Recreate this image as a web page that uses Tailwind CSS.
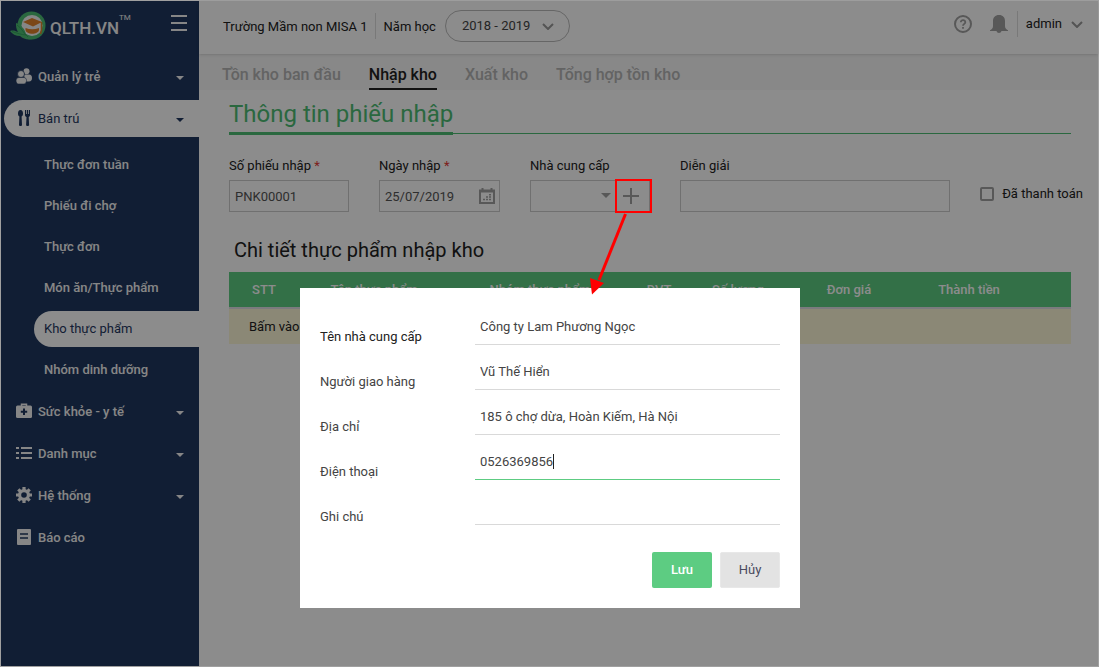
<!DOCTYPE html>
<html lang="vi">

<head>
    <meta charset="UTF-8" />
    <meta name="viewport" content="width=device-width, initial-scale=1.0" />
    <title>QLTH.VN - Nhập kho</title>
    <script src="https://cdn.jsdelivr.net/npm/@tailwindcss/browser@4"></script>
</head>

<body class="min-h-screen bg-white font-[Roboto,'Noto_Sans',sans-serif] text-[13px] leading-4 text-[#212121]">

    <div class="flex min-h-screen border border-[#a0a0a0]">

        <!-- Sidebar -->
        <aside class="w-[198px] shrink-0 bg-[#1f375f] font-medium text-[#f5f5f5]">
            <div class="flex h-[54px] items-center pl-[9px] pr-3">
                <a href="#" class="flex items-center gap-1" aria-label="QLTH.VN">
                    <svg class="mb-1 h-[30px] w-9" viewBox="0 0 36 30">
                        <circle cx="21.500" cy="14.500" r="14" fill="#4dbd74" />
                        <circle cx="22" cy="14.500" r="10.500" fill="#f5f5f5" />
                        <path d="M0 20c4-1 5 0 8 1-2-3-2-6-2-9 5 2 9 6 10 11 2 1 5 2 7 5-5 1-10 0-13-3-4 0-8-2-10-5z" fill="#4dbd74" />
                        <path d="M7 14c5 3 6 8 11 12M2 20.500c6 2 9 3 14 3.500" fill="none" stroke="#2f9e58" stroke-width=".8" />
                        <path d="M13 11l9-4 10 4-9 4.500z" fill="#e0822a" />
                        <path d="M16 14l7 2.800 6-2.800v3.500c-4 2-9 2-13 0z" fill="#f5f5f5" />
                        <path d="M15.500 17c4.500 1.800 9 1.800 13.500 0v2c-1 5-12.500 5-13.500 0z" fill="#e0822a" />
                        <path d="M31.500 11v8l-1 4" fill="none" stroke="#e0822a" stroke-width="1.500" />
                    </svg>
                    <span class="text-[17px] font-medium">QLTH.VN</span>
                    <span class="-ml-1 mb-5 text-[8px] leading-3 font-normal">TM</span>
                </a>
                <button type="button" class="mb-2.5 ml-auto flex w-4 flex-col gap-[5px]" aria-label="Menu">
                    <span class="h-0.5 w-4 bg-[#f5f5f5]"></span>
                    <span class="h-0.5 w-4 bg-[#f5f5f5]"></span>
                    <span class="h-0.5 w-4 bg-[#f5f5f5]"></span>
                </button>
            </div>

            <nav>
                <a href="#" class="flex h-[42px] items-center gap-1.5 pl-[15px] pr-[15px]">
                    <svg class="size-4" viewBox="0 0 16 16" fill="currentColor">
                        <circle cx="10.500" cy="3.200" r="3" />
                        <path d="M8 6.500h5c2 0 3 1.500 3 3.500s-1 3.500-3 3.500H9z" />
                        <circle cx="5" cy="6" r="3.500" stroke="#1f375f" stroke-width=".8" />
                        <path d="M3 9.500h4.500c2 0 3 1.200 3 3S9.500 16 8 16H2.500C1 16 0 14.500 0 12.800S1 9.500 3 9.500z" stroke="#1f375f" stroke-width=".6" />
                    </svg>
                    <span class="pt-0.5">Quản lý trẻ</span>
                    <svg class="mt-1 ml-auto h-1 w-2" viewBox="0 0 8 4" fill="currentColor"><path d="M0 0h8L4 4z" /></svg>
                </a>
                <div class="flex h-[42px] items-center pl-[3px]">
                    <a href="#" class="flex h-[37px] flex-1 items-center gap-1.5 rounded-l-full bg-white pl-3 pr-[15px] font-normal text-[#1f375f]">
                        <svg class="size-4" viewBox="0 0 16 16" fill="currentColor">
                            <path d="M4.500 0C6.300 0 7 1.700 7 3.500 7 5 6.500 6 5.600 6.500L6 15c0 1.300-3 1.300-3 0l.4-8.500C2.500 6 2 5 2 3.500 2 1.700 2.700 0 4.500 0z" />
                            <path d="M9 0h1v4h.8V0h1.400v4h.8V0h1v5c0 1-.6 1.700-1.300 2l.4 8c0 1.300-3 1.300-3 0l.4-8C9.600 6.700 9 6 9 5z" />
                        </svg>
                        <span class="pt-0.5">Bán trú</span>
                        <svg class="mt-1 ml-auto h-1 w-2" viewBox="0 0 8 4" fill="currentColor"><path d="M0 0h8L4 4z" /></svg>
                    </a>
                </div>

                <div class="pt-[5px]">
                    <a href="#" class="flex h-[41px] items-center pl-[43px]">Thực đơn tuần</a>
                    <a href="#" class="flex h-[41px] items-center pl-[43px]">Phiếu đi chợ</a>
                    <a href="#" class="flex h-[41px] items-center pl-[43px]">Thực đơn</a>
                    <a href="#" class="flex h-[41px] items-center pl-[43px]">Món ăn/Thực phẩm</a>
                    <div class="flex h-[41px] items-center pl-[33px]">
                        <a href="#" class="flex h-9 flex-1 items-center rounded-l-full bg-white pl-2.5 font-normal text-[#1f375f]">Kho thực phẩm</a>
                    </div>
                    <a href="#" class="flex h-[41px] items-center pl-[43px]">Nhóm dinh dưỡng</a>
                </div>

                <a href="#" class="flex h-[42px] items-center gap-1.5 pl-[15px] pr-[15px]">
                    <svg class="size-4" viewBox="0 0 16 16">
                        <path d="M5.500 3V1.300h5V3" fill="none" stroke="currentColor" stroke-width="1.500" />
                        <rect y="2.500" width="16" height="12.500" rx="1.500" fill="currentColor" />
                        <path d="M8 5.500v6.500M4.800 8.800h6.400" stroke="#1f375f" stroke-width="2" />
                    </svg>
                    <span class="pt-0.5">Sức khỏe - y tế</span>
                    <svg class="mt-1 ml-auto h-1 w-2" viewBox="0 0 8 4" fill="currentColor"><path d="M0 0h8L4 4z" /></svg>
                </a>
                <a href="#" class="flex h-[42px] items-center gap-1.5 pl-[15px] pr-[15px]">
                    <svg class="size-4" viewBox="0 0 16 16" fill="currentColor">
                        <path d="M0 2h3v2H0zM5 2h11v2H5zM0 7h3v2H0zM5 7h11v2H5zM0 12h3v2H0zM5 12h11v2H5z" />
                    </svg>
                    <span class="pt-0.5">Danh mục</span>
                    <svg class="mt-1 ml-auto h-1 w-2" viewBox="0 0 8 4" fill="currentColor"><path d="M0 0h8L4 4z" /></svg>
                </a>
                <a href="#" class="flex h-[42px] items-center gap-1.5 pl-[15px] pr-[15px]">
                    <svg class="size-4" viewBox="0 0 16 16">
                        <path d="M8 0v16M0 8h16M2.300 2.300l11.400 11.400M13.700 2.300L2.300 13.700" stroke="currentColor" stroke-width="3.200" />
                        <circle cx="8" cy="8" r="6" fill="currentColor" />
                        <circle cx="8" cy="8" r="2.800" fill="#1f375f" />
                    </svg>
                    <span class="pt-0.5">Hệ thống</span>
                    <svg class="mt-1 ml-auto h-1 w-2" viewBox="0 0 8 4" fill="currentColor"><path d="M0 0h8L4 4z" /></svg>
                </a>
                <a href="#" class="flex h-[42px] items-center gap-1.5 pl-[15px] pr-[15px]">
                    <svg class="size-4" viewBox="0 0 16 16">
                        <rect x="1" width="14" height="16" rx="1" fill="currentColor" />
                        <path d="M4 5h8M4 9h8" stroke="#1f375f" stroke-width="1.500" />
                    </svg>
                    <span class="pt-0.5">Báo cáo</span>
                </a>
            </nav>
        </aside>

        <!-- Content -->
        <div class="min-w-0 flex-1">
            <header class="relative flex h-[53px] items-center pb-[3px] pl-6 pr-[15px] shadow">
                <span class="pt-0.5">Trường Mầm non MISA 1</span>
                <span class="mr-2 ml-[7px] h-[26px] w-px bg-[#ddd]"></span>
                <label for="school-year" class="pt-0.5">Năm học</label>
                <div class="relative ml-[9px]">
                    <select id="school-year" class="block h-8 w-[125px] appearance-none rounded-full border border-[#bbb] pl-4 text-[#444]">
                        <option>2018 - 2019</option>
                    </select>
                    <svg class="pointer-events-none absolute top-[13px] right-4 h-[7px] w-3" viewBox="0 0 12 7" fill="none" stroke="#999" stroke-width="2"><path d="M1 1l5 5 5-5" /></svg>
                </div>

                <div class="mb-1 ml-auto flex items-center">
                    <button type="button" aria-label="Trợ giúp">
                        <svg class="size-[18px]" viewBox="0 0 18 18" fill="none" stroke="#a0a0a0">
                            <circle cx="9" cy="9" r="8" stroke-width="2" />
                            <path d="M6.800 7.300c0-3 4.600-2.800 4.500 0C11.300 8.900 9 8.900 9 10.800M9 12v1.800" stroke-width="1.800" />
                        </svg>
                    </button>
                    <button type="button" class="ml-[18px]" aria-label="Thông báo">
                        <svg class="size-[18px]" viewBox="0 0 18 18" fill="#a0a0a0">
                            <path d="M9 0c3.800 0 6 2.500 6 6v5c0 2 1 3.500 3 4.200V16h-6.500c-.5 2.600-4.500 2.600-5 0H0v-.8C2 14.500 3 13 3 11V6c0-3.500 2.200-6 6-6z" />
                        </svg>
                    </button>
                    <span class="mr-2 ml-[9px] h-[26px] w-px bg-[#ddd]"></span>
                    <button type="button" class="flex items-center gap-[9px]">
                        admin
                        <svg class="h-[7px] w-3" viewBox="0 0 12 7" fill="none" stroke="#999" stroke-width="2"><path d="M1 1l5 5 5-5" /></svg>
                    </button>
                </div>
            </header>

            <nav class="flex h-9 gap-7 bg-[#f7f7f7] pl-[23px] text-base font-medium text-[#b5b5b5]">
                <a href="#" class="flex items-center pt-1.5">Tồn kho ban đầu</a>
                <a href="#" class="flex items-center border-b-2 border-[#212121] pt-2 text-[#212121]">Nhập kho</a>
                <a href="#" class="flex items-center pt-1.5">Xuất kho</a>
                <a href="#" class="flex items-center pt-1.5">Tổng hợp tồn kho</a>
            </nav>

            <main class="pl-[30px] pr-[27px]">
                <div class="flex items-end">
                    <h1 class="border-b-[3px] border-[#4dbd74] pt-[9px] pb-[3px] text-2xl leading-[30px] text-[#4dbd74]">Thông tin phiếu nhập</h1>
                    <span class="mb-px h-px flex-1 bg-[#4dbd74]"></span>
                </div>

                <form class="-mr-3 flex gap-[30px] pt-[23px]">
                    <div class="w-[120px]">
                        <label for="voucher" class="block pb-1.5">Số phiếu nhập <span class="text-[#e53935]">*</span></label>
                        <input id="voucher" type="text" value="PNK00001" class="h-8 w-full border border-[#ccc] px-[5px] text-[#555]" />
                    </div>
                    <div class="w-[121px]">
                        <label for="import-date" class="block pb-1.5">Ngày nhập <span class="text-[#e53935]">*</span></label>
                        <div class="flex h-8 items-center border border-[#ccc] pr-1">
                            <input id="import-date" type="text" value="25/07/2019" class="h-full min-w-0 flex-1 px-[5px] text-[#555]" />
                            <button type="button" aria-label="Chọn ngày">
                                <svg class="size-4" viewBox="0 0 16 16" fill="none" stroke="#a0a0a0">
                                    <path d="M1 2.500h14V15H1z" stroke-width="2" />
                                    <path d="M3.500 0v4M12.500 0v4M1 3.500h14" stroke-width="2" />
                                    <path d="M4 11.500h2M7 11.500h2M10 11.500h2M7 9h2M10 9h2M10 6.800h2" stroke-width="1.500" />
                                </svg>
                            </button>
                        </div>
                    </div>
                    <div class="w-[120px]">
                        <label for="supplier" class="block pb-1.5">Nhà cung cấp</label>
                        <div class="flex h-8 border border-[#ccc]">
                            <div class="relative flex-1">
                                <select id="supplier" class="h-full w-full appearance-none"></select>
                                <svg class="pointer-events-none absolute top-3 right-1 h-[5px] w-2.5" viewBox="0 0 10 5" fill="#a0a0a0"><path d="M0 0h10L5 5z" /></svg>
                            </div>
                            <button type="button" class="flex w-[34px] items-center pl-2" aria-label="Thêm nhà cung cấp">
                                <svg class="size-4" viewBox="0 0 16 16" stroke="#a0a0a0" stroke-width="2"><path d="M8 0v16M0 8h16" /></svg>
                            </button>
                        </div>
                    </div>
                    <div class="flex-1">
                        <label for="note" class="block pb-1.5">Diễn giải</label>
                        <input id="note" type="text" class="h-8 w-full border border-[#ccc] px-[5px]" />
                    </div>
                    <label class="flex items-center gap-2 self-end pb-2.5 whitespace-nowrap">
                        <input type="checkbox" class="size-3.5 appearance-none rounded-xs border-2 border-[#a0a0a0]" />
                        Đã thanh toán
                    </label>
                </form>

                <h2 class="pt-[26px] pb-2.5 pl-[5px] text-xl leading-6">Chi tiết thực phẩm nhập kho</h2>

                <table class="w-full table-fixed border-collapse">
                    <thead>
                        <tr class="h-9 border-b-2 border-[#e0e0e6] bg-[#5dcc82] text-white">
                            <th class="w-[70px] font-medium">STT</th>
                            <th class="w-[150px] font-medium">Tên thực phẩm</th>
                            <th class="w-[182px] font-medium">Nhóm thực phẩm</th>
                            <th class="w-14 font-medium">ĐVT</th>
                            <th class="w-[102px] font-medium">Số lượng</th>
                            <th class="w-[120px] font-medium">Đơn giá</th>
                            <th class="w-[120px] font-medium">Thành tiền</th>
                            <th></th>
                        </tr>
                    </thead>
                    <tbody>
                        <tr class="h-9 bg-[#fdf7d8]">
                            <td colspan="8" class="pl-5">Bấm vào</td>
                        </tr>
                    </tbody>
                </table>
            </main>
        </div>
    </div>

    <!-- Backdrop -->
    <div class="fixed inset-px bg-black/45"></div>

    <!-- Supplier dialog -->
    <div class="fixed inset-0 flex items-start justify-center pt-72 pl-px">
        <form role="dialog" aria-label="Thêm nhà cung cấp" class="w-[500px] bg-white px-5 pt-3 pb-5 text-[#444]">
            <div class="flex h-[45px] items-end">
                <label for="sup-name" class="w-[155px] text-[#212121]">Tên nhà cung cấp</label>
                <input id="sup-name" type="text" value="Công ty Lam Phương Ngọc" class="h-9 flex-1 border-b border-[#d9d9d9] px-[5px]" />
            </div>
            <div class="flex h-[45px] items-end">
                <label for="sup-person" class="w-[155px]">Người giao hàng</label>
                <input id="sup-person" type="text" value="Vũ Thế Hiển" class="h-9 flex-1 border-b border-[#d9d9d9] px-[5px]" />
            </div>
            <div class="flex h-[45px] items-end">
                <label for="sup-address" class="w-[155px]">Địa chỉ</label>
                <input id="sup-address" type="text" value="185 ô chợ dừa, Hoàn Kiếm, Hà Nội" class="h-9 flex-1 border-b border-[#d9d9d9] px-[5px]" />
            </div>
            <div class="flex h-[45px] items-end">
                <label for="sup-phone" class="w-[155px]">Điện thoại</label>
                <div class="relative flex flex-1">
                    <input id="sup-phone" type="text" value="0526369856" class="h-9 flex-1 border-b border-[#5dcc82] px-[5px] caret-transparent" />
                    <span class="absolute top-2.5 left-[78px] h-[15px] w-px bg-[#212121]"></span>
                </div>
            </div>
            <div class="flex h-[45px] items-end">
                <label for="sup-note" class="w-[155px]">Ghi chú</label>
                <input id="sup-note" type="text" class="h-9 flex-1 border-b border-[#d9d9d9] px-[5px]" />
            </div>
            <div class="flex justify-end gap-2 pt-[27px]">
                <button type="button" class="h-9 w-[60px] rounded-xs bg-[#5dcc82] font-medium text-white">Lưu</button>
                <button type="button" class="h-9 w-[60px] rounded-xs border border-[#e8e8e8] bg-[#e3e3e3] text-[#4a4a5e]">Hủy</button>
            </div>
        </form>
    </div>

    <!-- Guide marker: add button opens the dialog -->
    <svg class="pointer-events-none absolute top-[179px] left-[590px] h-[116px] w-[62px]" viewBox="0 0 62 116">
        <rect x="26" y="1" width="35" height="32" fill="none" stroke="#ff0000" stroke-width="2" />
        <path d="M35.500 35L9 101" stroke="#ff0000" stroke-width="3" />
        <path d="M0 99l14 5L2 115.500z" fill="#ff0000" />
    </svg>

</body>

</html>
